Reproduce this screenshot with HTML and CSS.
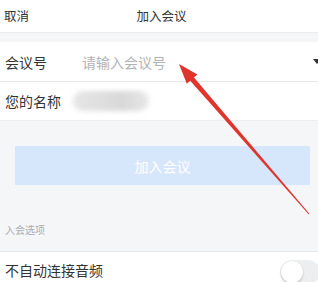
FILE: index.html
```html
<!DOCTYPE html>
<html>
<head>
<meta charset="utf-8">
<link rel="stylesheet" href="styles.css">
</head>
<body>
<div class="page">
  <header class="topbar">
    <span class="cancel">取消</span>
    <span class="title">加入会议</span>
  </header>
  <div class="gap-band"></div>
  <div class="row">
    <span class="label">会议号</span>
    <span class="placeholder">请输入会议号</span>
    <span class="caret"></span>
  </div>
  <div class="row last">
    <span class="label">您的名称</span>
    <span class="blurname"></span>
  </div>
  <div class="gray-area">
    <button class="join-btn">加入会议</button>
    <div class="section-title">入会选项</div>
  </div>
  <div class="row option">
    <span class="label">不自动连接音频</span>
    <span class="toggle"><span class="knob"></span></span>
  </div>
  <svg class="arrow" width="318" height="282" viewBox="0 0 318 282">
    <polygon fill="#e0352d" points="179,64 197.4,74.5 194.0,77.5 309.4,213.7 308.6,214.3 190.2,80.7 186.8,83.7"/>
  </svg>
</div>
</body>
</html>
```
FILE: styles.css
```css
* { box-sizing: border-box; }
html, body {
  margin: 0;
  padding: 0;
  background: #f5f6f8;
}
body {
  font-family: "Noto Sans CJK SC", "Noto Sans", sans-serif;
  color: #333;
}
.page {
  position: relative;
  width: 318px;
  height: 282px;
  overflow: hidden;
  background: #f5f6f8;
}
.topbar {
  height: 33px;
  background: #fff;
  border-bottom: 1px solid #e9ebef;
  display: flex;
  align-items: center;
  position: relative;
  font-size: 12.5px;
  padding-left: 4px;
  padding-bottom: 2px;
}
.cancel { color: #333; }
.title {
  position: absolute;
  left: 0;
  right: 0;
  text-align: center;
  padding-left: 5px;
  pointer-events: none;
}
.gap-band {
  height: 9px;
  background: #f5f6f8;
}
.row {
  height: 40px;
  background: #fff;
  display: flex;
  align-items: center;
  padding-left: 5px;
  border-bottom: 1px solid #e6e8ec;
  font-size: 14px;
}
.row.last { height: 38px; border-bottom: none; }
.label { color: #333; }
.placeholder {
  margin-left: 35px;
  color: #b0b3b8;
  font-size: 14px;
}
.caret {
  margin-left: auto;
  width: 0;
  height: 0;
  border-left: 4px solid transparent;
  border-right: 4px solid transparent;
  border-top: 5px solid #333;
  margin-right: -3px;
}
.blurname {
  margin-left: 12px;
  width: 76px;
  height: 20px;
  background: linear-gradient(90deg, #e6e6e6 0%, #dedede 40%, #d8d8d8 65%, #e8e8e8 100%);
  border-radius: 10px;
  filter: blur(2.5px);
}
.gray-area {
  height: 132px;
  padding: 25px 8px 0 15px;
  border-top: 1px solid #eceef1;
  border-bottom: 1px solid #e6e8ec;
}
.join-btn {
  display: block;
  width: 295px;
  height: 39px;
  border: none;
  background: #d7e7fb;
  color: #fff;
  font-family: inherit;
  font-size: 14px;
  border-radius: 1px;
  padding: 0;
}
.section-title {
  margin-left: -10px;
  margin-top: 37px;
  font-size: 10px;
  color: #a9acb1;
}
.row.option {
  height: 30px;
  border-bottom: none;
  align-items: flex-start;
  padding-top: 8px;
}
.toggle {
  margin-left: auto;
  width: 40px;
  height: 24px;
  border-radius: 12px;
  background: #eceef0;
  position: relative;
  margin-right: -2px;
}
.knob {
  position: absolute;
  left: 1px;
  top: 1px;
  width: 22px;
  height: 22px;
  border-radius: 50%;
  background: #fff;
  box-shadow: 0 1px 2px rgba(0,0,0,0.25);
}
.arrow {
  position: absolute;
  left: 0;
  top: 0;
  pointer-events: none;
}
```
